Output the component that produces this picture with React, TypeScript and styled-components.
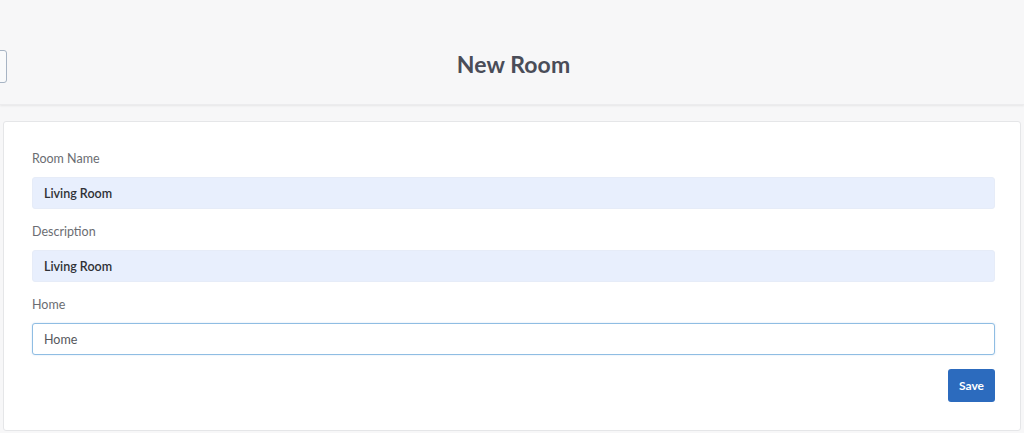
import styled, { createGlobalStyle } from 'styled-components';

const GlobalStyle = createGlobalStyle`
  html, body {
    margin: 0;
    padding: 0;
    background: #f7f7f8;
    font-family: Lato, "Open Sans", "Liberation Sans", sans-serif;
  }
`;

const fields = [
  { label: 'Room Name', value: 'Living Room', filled: true },
  { label: 'Description', value: 'Living Room', filled: true },
  { label: 'Home', value: 'Home', filled: false },
];

const App = () => {
  return (
    <>
      <GlobalStyle />
      <Header>
        <BackButton aria-label="Back" />
        <Title>New Room</Title>
      </Header>
      <Main>
        <Card>
          {fields.map((field) => (
            <Field key={field.label}>
              <Label>{field.label}</Label>
              <Input filled={field.filled} defaultValue={field.value} />
            </Field>
          ))}
          <Actions>
            <SaveButton>Save</SaveButton>
          </Actions>
        </Card>
      </Main>
    </>
  );
};

const Header = styled.header`
  display: flex;
  align-items: center;
  height: 105px;
  padding-top: 24px;
  background: #f7f7f8;
  box-shadow: 0 1px 2px rgba(0, 0, 0, 0.07);
  border-bottom: 1px solid #ececee;
  box-sizing: border-box;
`;

const BackButton = styled.button`
  width: 40px;
  height: 33px;
  margin-left: -33px;
  margin-top: 4px;
  border: 1px solid #a7b4c4;
  border-radius: 3px;
  background: #f9fafb;
`;

const Title = styled.h1`
  flex: 1;
  margin: 0 4px 0 0;
  text-align: center;
  font-size: 23px;
  font-weight: 700;
  color: #4a4d58;
  letter-spacing: 0.1px;
`;

const Main = styled.main`
  padding: 16px 3px 2px;
`;

const Card = styled.section`
  background: #fff;
  border: 1px solid #e5e6e8;
  border-radius: 3px;
  padding: 28px 25px 28px 28px;
`;

const Field = styled.div`
  display: flex;
  flex-direction: column;
  margin-bottom: 14px;
`;

const Label = styled.label`
  font-size: 12.5px;
  line-height: 18px;
  color: #6b6d72;
  margin-bottom: 9px;
`;

const Input = styled.input<{ filled: boolean }>`
  height: 32px;
  box-sizing: border-box;
  padding: 0 11px;
  border-radius: 3px;
  font-family: inherit;
  font-size: 12.5px;
  font-weight: ${({ filled }) => (filled ? 600 : 400)};
  color: ${({ filled }) => (filled ? '#2f3136' : '#55575c')};
  background: ${({ filled }) => (filled ? '#e8effd' : '#fff')};
  border: ${({ filled }) =>
    filled ? '1px solid #e6ecf8' : '1.5px solid #8fbde3'};
  box-shadow: ${({ filled }) =>
    filled ? 'none' : '0 0 2px rgba(120, 170, 220, 0.35)'};
  outline: none;
`;

const Actions = styled.div`
  display: flex;
  justify-content: flex-end;
`;

const SaveButton = styled.button`
  width: 47px;
  height: 33px;
  border: none;
  border-radius: 3px;
  background: #2c6bbe;
  color: #fff;
  font-family: inherit;
  font-size: 12px;
  font-weight: 700;
`;

export default App;
